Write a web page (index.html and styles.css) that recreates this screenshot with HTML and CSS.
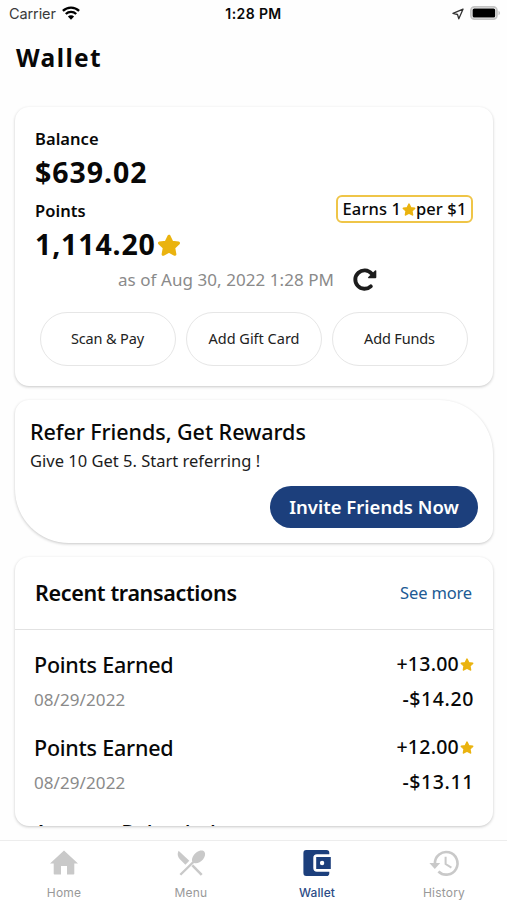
FILE: index.html
```html
<!DOCTYPE html>
<html lang="en">
<head>
<meta charset="utf-8">
<title>Wallet</title>
<link rel="stylesheet" href="styles.css">
</head>
<body>
<svg class="defs" aria-hidden="true">
  <symbol id="star" viewBox="0 0 24 24"><path d="M12 2.200l2.900 6 6.600.9-4.800 4.600 1.200 6.600-5.900-3.100-5.900 3.100 1.200-6.600L2.500 9.100l6.600-.9z" fill="#eab30f" stroke="#eab30f" stroke-width="3" stroke-linejoin="round"/></symbol>
</svg>
<div class="app">
  <header class="status">
    <div class="status-left">
      <span class="carrier">Carrier</span>
      <svg class="wifi" viewBox="0 0 18 14"><path d="M.9 4.900a11.600 11.600 0 0 1 16.200 0M3.800 8a7.400 7.400 0 0 1 10.400 0" fill="none" stroke="#000" stroke-width="2.300"/><path d="M9 13.800L5.900 10.500a4.400 4.400 0 0 1 6.200 0z"/></svg>
    </div>
    <span class="clock">1:28 PM</span>
    <div class="status-right">
      <svg class="locate" viewBox="0 0 12 12"><path d="M11 1.200L1 5.400l4.500 1.100 1.300 4.300z" fill="none" stroke="#333" stroke-width="1.300" stroke-linejoin="round"/></svg>
      <svg class="battery" viewBox="0 0 30 14"><rect x=".9" y=".9" width="26" height="12.200" rx="3.600" fill="#fff" stroke="#c4c4c4" stroke-width="1.800"/><rect x="2.600" y="2.400" width="22.600" height="9.200" rx="1.600"/><path d="M28.500 4.800q1.600.8 1.600 2.200t-1.600 2.200z" fill="#c4c4c4"/></svg>
    </div>
  </header>

  <h1 class="title">Wallet</h1>

  <main class="content">
    <section class="card balance">
      <div class="label">Balance</div>
      <div class="amount">$639.02</div>
      <div class="points-row">
        <span class="label">Points</span>
        <span class="badge"><span>Earns 1</span><svg class="star-sm"><use href="#star"/></svg><span>per $1</span></span>
      </div>
      <div class="amount points"><span>1,114.20</span><svg class="star-lg"><use href="#star"/></svg></div>
      <div class="as-of">
        <span>as of Aug 30, 2022 1:28 PM</span>
        <svg class="refresh" viewBox="0 0 24 24"><path d="M17.800 18.300A9.200 9.200 0 1 1 18.500 5.600" fill="none" stroke="#1c1c1c" stroke-width="3.900" stroke-linecap="round"/><path d="M22 2.600q1.300-1.100 1.300.5v6.200q0 1-1 1h-6.500q-1.600 0-.5-1.200z" fill="#1c1c1c"/></svg>
      </div>
      <div class="actions">
        <button class="pill scan">Scan &amp; Pay</button>
        <button class="pill">Add Gift Card</button>
        <button class="pill funds">Add Funds</button>
      </div>
    </section>

    <section class="card refer">
      <h2 class="refer-title">Refer Friends, Get Rewards</h2>
      <p class="refer-text">Give 10 Get 5. Start referring !</p>
      <button class="invite">Invite Friends Now</button>
    </section>

    <section class="card recent">
      <div class="recent-head">
        <h2 class="recent-title">Recent transactions</h2>
        <a class="more">See more</a>
      </div>
      <ul class="list">
        <li class="row">
          <div class="what"><div class="name">Points Earned</div><div class="date">08/29/2022</div></div>
          <div class="sums"><div class="earned"><span>+13.00</span><svg class="star-sm"><use href="#star"/></svg></div><div class="spent">-$14.20</div></div>
        </li>
        <li class="row">
          <div class="what"><div class="name">Points Earned</div><div class="date">08/29/2022</div></div>
          <div class="sums"><div class="earned"><span>+12.00</span><svg class="star-sm"><use href="#star"/></svg></div><div class="spent">-$13.11</div></div>
        </li>
        <li class="row last">
          <div class="what"><div class="name">Account Reloaded</div></div>
        </li>
      </ul>
    </section>
  </main>

  <nav class="tabs">
    <a class="tab">
      <svg viewBox="0 0 28 26"><path d="M14 .5L28 13.400h-3.700V23.700q0 .8-.8.8H17V16h-6v8.500H4.500q-.8 0-.8-.8V13.400H0z" fill="#c9c9c9"/></svg>
      <span>Home</span>
    </a>
    <a class="tab">
      <svg viewBox="0 0 28 26"><g fill="#c9c9c9"><path d="M1.600.8L12.300 10.800 8.400 14.700 2.600 9Q-.6 5.200 1.600.8z"/><path d="M15.300 11.600C14.200 8.500 16.400 4.600 19.600 2.200 22.800.1 26.100.2 27.400 1.800c1.300 1.700.9 4.900-1.400 7.600-2.600 3-6.200 4.600-9 3.500L4.200 25.600 2.500 23.900z"/><path d="M16.200 14.500l9.400 9.400-1.800 1.800-9.300-9.500z"/></g></svg>
      <span>Menu</span>
    </a>
    <a class="tab active">
      <svg viewBox="0 0 28 26"><path d="M3.200 0H23.500Q26.300 0 26.300 2.800V4.300H14Q10.300 4.300 10.300 8V18Q10.300 21.700 14 21.700H26.300V23.200Q26.300 26 23.500 26H3.200Q.4 26 .4 22.800V3.200Q.4 0 3.200 0z" fill="#1c3f7c"/><path fill-rule="evenodd" d="M13.200 7H27.800V19H13.200zM19.100 10.800a2.200 2.200 0 1 0 .01 4.400a2.200 2.200 0 1 0 0-4.400z" fill="#1c3f7c"/></svg>
      <span>Wallet</span>
    </a>
    <a class="tab">
      <svg viewBox="0 0 28 26"><path d="M4.900 13.500A11.300 11.300 0 1 1 8.400 21.500" fill="none" stroke="#c9c9c9" stroke-width="2.600"/><path d="M-.6 13H10.200L4.800 19z" fill="#c9c9c9"/><path d="M15.600 6.800V14l5.800 3.600" fill="none" stroke="#c9c9c9" stroke-width="2"/></svg>
      <span>History</span>
    </a>
  </nav>
</div>
</body>
</html>
```
FILE: styles.css
```css
* { box-sizing: border-box; }
body {
  margin: 0;
  background: #fefefe;
  color: #080808;
  font-family: "Noto Sans", sans-serif;
}
h1, h2, p, ul { margin: 0; padding: 0; }
button { font-family: inherit; padding: 0; }
svg { display: block; flex: none; overflow: visible; }
.defs { position: absolute; width: 0; height: 0; }

.app { display: flex; flex-direction: column; width: 507px; height: 900px; overflow: hidden; }

.status {
  display: grid;
  grid-template-columns: 1fr auto 1fr;
  align-items: center;
  height: 27px;
  padding: 0 7px 0 9px;
  font-family: Inter, sans-serif;
}
.status-left, .status-right { display: flex; align-items: center; }
.status-right { justify-content: flex-end; gap: 6px; }
.carrier { font-size: 14.5px; letter-spacing: -0.1px; color: #3a3a3a; }
.wifi { width: 18px; height: 14px; margin: -2px 0 0 6px; }
.clock { margin-right: 2px; font-size: 14px; font-weight: 600; letter-spacing: 0.4px; }
.locate { width: 12px; height: 12px; }
.battery { width: 30px; height: 14px; margin-top: -1px; }

.title {
  height: 61px;
  padding-left: 16px;
  font-size: 24.5px;
  font-weight: 700;
  line-height: 62px;
  letter-spacing: 1.4px;
}

.content { display: flex; flex-direction: column; gap: 14px; padding: 19px 14px 14px 15px; height: 752px; }
.card { background: #fff; border-radius: 14px; box-shadow: 0 1px 3px rgba(0, 0, 0, 0.22); }

.balance { height: 279px; padding: 20px 20px 0; }
.label { font-size: 16.5px; font-weight: 600; line-height: 23px; letter-spacing: 0.05px; }
.amount { font-size: 28.5px; font-weight: 700; line-height: 44px; letter-spacing: 0.95px; }
.points-row { display: flex; justify-content: space-between; align-items: center; height: 33px; }
.badge {
  display: flex;
  align-items: center;
  justify-content: center;
  width: 137px;
  height: 28px;
  margin-top: -4px;
  border: 2px solid #efc548;
  border-radius: 6px;
  font-size: 16.5px;
  font-weight: 500;
  letter-spacing: 0.1px;
}
.star-sm { width: 14px; height: 14px; margin: 2px 0 0 1px; }
.star-lg { width: 24px; height: 24px; margin: 2px 0 0 1px; }
.points { display: flex; align-items: center; line-height: 35px; letter-spacing: 0.85px; }
.as-of {
  display: flex;
  align-items: center;
  gap: 19px;
  height: 37px;
  padding-left: 83px;
  color: #8a8a8a;
  font-size: 17px;
  letter-spacing: 0.06px;
}
.as-of span { margin-top: -2px; }
.refresh { width: 24px; height: 24px; margin-top: -2px; }
.actions { display: flex; gap: 10px; margin: 13px 5px 0; }
.pill {
  width: 136px;
  height: 54px;
  padding-bottom: 2px;
  border: 1.500px solid #e6e6e6;
  border-radius: 27px;
  background: #fff;
  color: #222;
  font-size: 14.5px;
}
.scan, .funds { padding-right: 1px; letter-spacing: -0.15px; }

.refer {
  display: flex;
  flex-direction: column;
  height: 143px;
  padding: 16px 15px 0;
  border-radius: 14px 54px 14px 54px;
}
.refer-title { font-size: 21.5px; font-weight: 500; line-height: 31px; letter-spacing: -0.06px; }
.refer-text { color: #1c1c1c; font-size: 16.500px; line-height: 27px; }
.invite {
  align-self: flex-end;
  width: 208px;
  height: 42px;
  margin-top: 12px;
  padding-bottom: 2px;
  border: 0;
  border-radius: 21px;
  background: #1c3f7c;
  color: #fff;
  font-size: 18.5px;
  font-weight: 600;
}

.recent { height: 269px; overflow: hidden; }
.recent-head {
  display: flex;
  align-items: center;
  justify-content: space-between;
  height: 73px;
  padding: 0 21px 2px 20px;
  border-bottom: 1px solid #e2e2e2;
}
.recent-title { font-size: 21.5px; font-weight: 600; letter-spacing: -0.34px; }
.more { color: #205a94; font-size: 16.5px; letter-spacing: -0.16px; }
.list { list-style: none; }
.row { display: flex; justify-content: space-between; height: 83px; padding: 16px 19px 0; }
.last { padding-top: 18px; }
.name { font-size: 21.5px; font-weight: 500; line-height: 38px; letter-spacing: -0.23px; }
.date { color: #8a8a8a; font-size: 17px; line-height: 32px; letter-spacing: 0.08px; }
.sums { display: flex; flex-direction: column; align-items: flex-end; font-size: 19.5px; font-weight: 500; }
.earned { display: flex; flex: none; align-items: center; height: 35px; letter-spacing: 0.25px; }
.spent { flex: none; line-height: 36px; letter-spacing: 0.6px; }

.tabs { display: flex; height: 60px; border-top: 1px solid #ededed; background: #fff; }
.tab {
  display: flex;
  flex: 1;
  flex-direction: column;
  align-items: center;
  padding: 9px 0 0 1px;
  color: #999;
  font-family: Inter, sans-serif;
  font-size: 12px;
  line-height: 14px;
  letter-spacing: 0.2px;
}
.tab svg { width: 28px; height: 26px; margin-bottom: 10px; }
.active { padding-left: 0; color: #2c4c86; font-weight: 500; letter-spacing: 0.1px; }
```
